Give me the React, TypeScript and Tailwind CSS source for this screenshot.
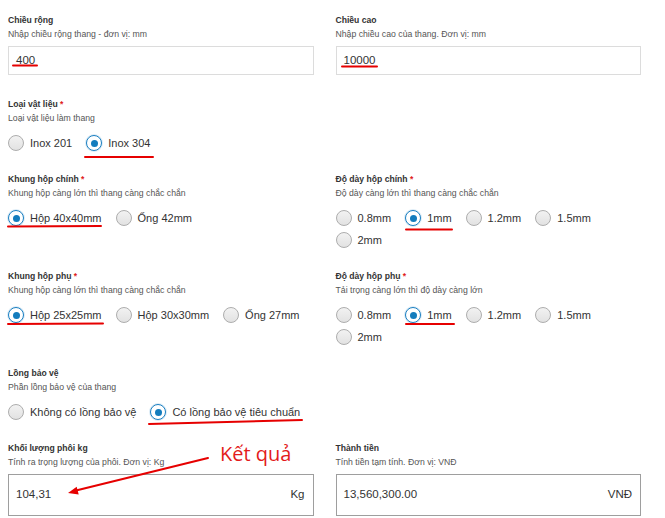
import React from 'react';

type Opt = { label: string; checked?: boolean };

const Radio: React.FC<Opt> = ({ label, checked }) => (
  <label className="flex items-center gap-[6px] h-[20px] text-[11px] text-[#333]">
    {checked ? (
      <span className="w-[16px] h-[16px] rounded-full border-[1.5px] border-[#1a7fc1] bg-white flex items-center justify-center shadow-[0_0_0_1px_rgba(26,127,193,0.15)]">
        <span className="w-[7px] h-[7px] rounded-full bg-[#137cbd]" />
      </span>
    ) : (
      <span className="w-[16px] h-[16px] rounded-full border border-[#adadad] bg-gradient-to-b from-[#f2f2f2] to-[#e2e2e2]" />
    )}
    <span>{label}</span>
  </label>
);

const Label: React.FC<{ title: string; hint: string; required?: boolean }> = ({ title, hint, required }) => (
  <>
    <div className="text-[8.6px] leading-[14px] font-bold text-[#333]">
      {title}
      {required && <span className="text-[#e02020]"> *</span>}
    </div>
    <div className="text-[8.7px] leading-[14px] text-[#555]">{hint}</div>
  </>
);

const RadioGroup: React.FC<{ options: Opt[] }> = ({ options }) => (
  <div className="mt-[8px] flex flex-wrap gap-x-[14px] gap-y-[2px]">
    {options.map((o) => (
      <Radio key={o.label} {...o} />
    ))}
  </div>
);

const mm = (sel: string): Opt[] =>
  ['0.8mm', '1mm', '1.2mm', '1.5mm', '2mm'].map((l) => ({ label: l, checked: l === sel }));

export default function App() {
  return (
    <div
      className="relative w-[665px] h-[518px] overflow-hidden bg-white pl-2 pr-6 pt-[13px]"
      style={{ fontFamily: '"Liberation Sans", Arial, sans-serif' }}
    >
      <div className="grid grid-cols-2 gap-x-[22px] gap-y-[19px]">
        {/* Kích thước */}
        <div className="pb-[3px]">
          <Label title="Chiều rộng" hint="Nhập chiều rộng thang - đơn vị: mm" />
          <div className="mt-[5px] h-[29px] border border-[#dcdcdc] flex items-center pl-[7px] text-[11.5px] text-[#333]">
            400
          </div>
        </div>
        <div className="pb-[3px]">
          <Label title="Chiều cao" hint="Nhập chiều cao của thang. Đơn vị: mm" />
          <div className="mt-[5px] h-[29px] border border-[#dcdcdc] flex items-center pl-[7px] text-[11.5px] text-[#333]">
            10000
          </div>
        </div>

        {/* Vật liệu */}
        <div>
          <Label title="Loại vật liệu" hint="Loại vật liệu làm thang" required />
          <RadioGroup options={[{ label: 'Inox 201' }, { label: 'Inox 304', checked: true }]} />
        </div>
        <div />

        {/* Khung hộp chính */}
        <div>
          <Label title="Khung hộp chính" hint="Khung hộp càng lớn thì thang càng chắc chắn" required />
          <RadioGroup options={[{ label: 'Hộp 40x40mm', checked: true }, { label: 'Ống 42mm' }]} />
        </div>
        <div>
          <Label title="Độ dày hộp chính" hint="Độ dày càng lớn thì thang càng chắc chắn" required />
          <RadioGroup options={mm('1mm')} />
        </div>

        {/* Khung hộp phụ */}
        <div>
          <Label title="Khung hộp phụ" hint="Khung hộp càng lớn thì thang càng chắc chắn" required />
          <RadioGroup
            options={[{ label: 'Hộp 25x25mm', checked: true }, { label: 'Hộp 30x30mm' }, { label: 'Ống 27mm' }]}
          />
        </div>
        <div>
          <Label title="Độ dày hộp phụ" hint="Tải trọng càng lớn thì độ dày càng lớn" required />
          <RadioGroup options={mm('1mm')} />
        </div>

        {/* Lồng bảo vệ */}
        <div>
          <Label title="Lồng bảo vệ" hint="Phần lồng bảo vệ của thang" />
          <RadioGroup
            options={[{ label: 'Không có lồng bảo vệ' }, { label: 'Có lồng bảo vệ tiêu chuẩn', checked: true }]}
          />
        </div>
        <div />

        {/* Kết quả */}
        <div>
          <Label title="Khối lượng phôi kg" hint="Tính ra trọng lượng của phôi. Đơn vị: Kg" />
          <div className="mt-[5px] h-[42px] border border-[#9e9e9e] flex items-center justify-between pl-[7px] pr-[8px] text-[11.5px] text-[#333]">
            <span>104,31</span>
            <span>Kg</span>
          </div>
        </div>
        <div>
          <Label title="Thành tiền" hint="Tính tiền tạm tính. Đơn vị: VNĐ" />
          <div className="mt-[5px] h-[42px] border border-[#9e9e9e] flex items-center justify-between pl-[7px] pr-[8px] text-[11.5px] text-[#333]">
            <span>13,560,300.00</span>
            <span>VNĐ</span>
          </div>
        </div>
      </div>

      {/* Chú thích màu đỏ */}
      <svg className="absolute inset-0 pointer-events-none" width="665" height="518" viewBox="0 0 665 518">
        <g stroke="#e60000" strokeWidth="2" strokeLinecap="round" fill="none">
          <line x1="13" y1="65.5" x2="37" y2="65.5" />
          <line x1="342" y1="66.5" x2="377" y2="66.5" />
          <line x1="85" y1="157" x2="153" y2="157" />
          <line x1="8" y1="226.5" x2="101" y2="226" />
          <line x1="406" y1="229.5" x2="452" y2="229.5" />
          <line x1="8" y1="324" x2="103" y2="323.5" />
          <line x1="406" y1="324" x2="454" y2="324" />
          <line x1="149" y1="424" x2="302" y2="420" />
          <line x1="208" y1="458" x2="76" y2="490.5" />
        </g>
        <polygon points="68,493 78.7,494.5 76.7,486.7" fill="#e60000" />
      </svg>
      <div
        className="absolute left-[220px] top-[444px] text-[20px] leading-none text-[#e31b1b]"
        style={{ fontFamily: '"Open Sans", sans-serif' }}
      >
        Kết quả
      </div>
    </div>
  );
}
